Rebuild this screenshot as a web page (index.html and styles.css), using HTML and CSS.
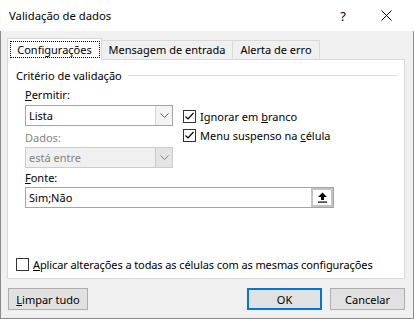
FILE: index.html
```html
<!DOCTYPE html>
<html lang="pt">
<head>
  <meta charset="UTF-8" />
  <title>Validação de dados</title>
  <link rel="stylesheet" href="styles.css">
</head>
<body>
  <div class="dialog">
    <!-- Barra de título -->
    <div class="titlebar">
      <span class="title">Validação de dados</span>
      <span class="help">?</span>
      <span class="close">
        <svg width="11" height="11" viewBox="0 0 11 11"><path d="M0.5 0.5 L10.5 10.5 M10.5 0.5 L0.5 10.5" stroke="#000" stroke-width="1" fill="none"/></svg>
      </span>
    </div>

    <div class="body">
      <!-- Abas -->
      <div class="tabs">
        <div class="tab active"><span class="focus">Configurações</span></div>
        <div class="tab msg">Mensagem de entrada</div>
        <div class="tab alert">Alerta de erro</div>
      </div>

      <div class="panel">
        <div class="group-title"><span>Critério de validação</span><span class="line"></span></div>

        <div class="criteria">
          <div class="col-left">
            <div class="label"><u>P</u>ermitir:</div>
            <div class="select">
              <span class="value">Lista</span>
              <span class="arrow"><svg width="9" height="5" viewBox="0 0 9 5"><path d="M0.5 0.5 L4.5 4.5 L8.5 0.5" stroke="#606060" fill="none"/></svg></span>
            </div>
            <div class="label disabled">Dados:</div>
            <div class="select disabled">
              <span class="value">está entre</span>
              <span class="arrow"><svg width="9" height="5" viewBox="0 0 9 5"><path d="M0.5 0.5 L4.5 4.5 L8.5 0.5" stroke="#808080" fill="none"/></svg></span>
            </div>
          </div>
          <div class="col-right">
            <div class="check">
              <span class="box"><svg width="11" height="11" viewBox="0 0 11 11"><path d="M1.5 5.5 L4 8 L9.5 2" stroke="#000" stroke-width="1.2" fill="none"/></svg></span>
              <span>Ignorar em <u>b</u>ranco</span>
            </div>
            <div class="check">
              <span class="box"><svg width="11" height="11" viewBox="0 0 11 11"><path d="M1.5 5.5 L4 8 L9.5 2" stroke="#000" stroke-width="1.2" fill="none"/></svg></span>
              <span>Menu suspenso na <u>c</u>élula</span>
            </div>
          </div>
        </div>

        <div class="label fonte"><u>F</u>onte:</div>
        <div class="textbox">
          <span class="value">Sim;Não</span>
          <span class="ref-btn">
            <svg width="11" height="11" viewBox="0 0 11 11"><path d="M5.5 0.5 L1 5 L4 5 L4 8 L7 8 L7 5 L10 5 Z" fill="#000"/><rect x="1" y="9.5" width="9" height="1.2" fill="#000"/></svg>
          </span>
        </div>

        <div class="check apply">
          <span class="box"></span>
          <span class="apply-text"><u>A</u>plicar alterações a todas as células com as mesmas configurações</span>
        </div>
      </div>

      <!-- Botões -->
      <div class="buttons">
        <button class="btn clear"><u>L</u>impar tudo</button>
        <span class="spacer"></span>
        <button class="btn ok">OK</button>
        <button class="btn cancel">Cancelar</button>
      </div>
    </div>
  </div>
</body>
</html>
```

FILE: styles.css
```css
body {
  margin: 0;
  font-family: 'Noto Sans', 'Liberation Sans', sans-serif;
  font-size: 11px;
  color: #000;
  background: #fff;
}

.dialog {
  width: 414px;
  height: 319px;
  white-space: nowrap;
}

.titlebar {
  height: 31px;
  display: flex;
  align-items: center;
  padding-left: 9px;
  background: #fff;
}

.title {
  flex: 1;
  font-size: 11.3px;
}

.help {
  font-size: 13px;
  width: 20px;
  text-align: center;
  margin-right: 28px;
}

.close {
  display: flex;
  margin-right: 22px;
}

.body {
  height: 288px;
  box-sizing: border-box;
  background: #f0f0f0;
  border: 1px solid #8a8a8a;
  border-top: none;
  padding: 7px 8px 0 6px;
}

/* Abas */
.tabs {
  display: flex;
  align-items: flex-end;
  height: 21px;
}

.tab {
  height: 19px;
  box-sizing: border-box;
  border: 1px solid #d9d9d9;
  border-bottom: none;
  margin-left: -1px;
  display: flex;
  align-items: center;
  justify-content: center;
  line-height: 16px;
}

.tab.msg {
  width: 132px;
}

.tab.alert {
  width: 88px;
}

.tab.active {
  position: relative;
  width: 95px;
  height: 22px;
  margin-left: 0;
  margin-bottom: -1px;
  background: #fff;
  align-items: flex-start;
  padding-top: 3px;
}

.focus {
  outline: 1px dotted #000;
  width: 88px;
  text-align: center;
  line-height: 15px;
}

.panel {
  height: 220px;
  box-sizing: border-box;
  background: #fff;
  border: 1px solid #d9d9d9;
  padding: 7px 7px 0 8px;
}

.group-title {
  display: flex;
  align-items: center;
  height: 16px;
}

.group-title .line {
  flex: 1;
  height: 1px;
  background: #dcdcdc;
  margin-left: 6px;
}

.criteria {
  display: flex;
  padding-left: 9px;
  margin-top: 4px;
}

.col-left {
  width: 148px;
}

.col-right {
  margin-left: 10px;
  padding-top: 20px;
}

.label {
  line-height: 16px;
}

.label.disabled {
  color: #838383;
  margin-top: 4px;
}

.select {
  margin-top: 2px;
  height: 21px;
  box-sizing: border-box;
  border: 1px solid #a5a5a5;
  display: flex;
  background: #fff;
}

.select.disabled {
  margin-top: 1px;
  background: #f0f0f0;
  border-color: #cccccc;
  color: #838383;
}

.select .value,
.textbox .value {
  flex: 1;
  padding-left: 3px;
  line-height: 19px;
}

.select .arrow {
  width: 16px;
  border-left: 1px solid #d4d4d4;
  background: #f3f3f3;
  display: flex;
  align-items: center;
  justify-content: center;
}

.select.disabled .arrow {
  background: #e4e4e4;
  border-left-color: #cccccc;
}

.check {
  display: flex;
  align-items: center;
  height: 19px;
}

.box {
  width: 13px;
  height: 13px;
  box-sizing: border-box;
  border: 1px solid #333;
  background: #fff;
  margin-right: 4px;
  display: flex;
}

.label.fonte {
  margin-left: 9px;
  margin-top: 2px;
}

.textbox {
  margin: 1px 0 0 9px;
  width: 309px;
  height: 21px;
  box-sizing: border-box;
  border: 1px solid #a5a5a5;
  display: flex;
  background: #fff;
}

.ref-btn {
  width: 22px;
  box-sizing: border-box;
  border: 2px solid #c4c4c4;
  background: #fff;
  display: flex;
  align-items: center;
  justify-content: center;
}

.check.apply {
  margin-top: 48px;
  height: 16px;
}

.apply-text {
  letter-spacing: -0.1px;
}

/* Botões */
.buttons {
  display: flex;
  margin-top: 9px;
  gap: 8px;
}

.spacer {
  flex: 1;
}

.btn {
  height: 22px;
  box-sizing: border-box;
  background: #e1e1e1;
  border: 1px solid #adadad;
  font-family: inherit;
  font-size: 11px;
  color: #000;
  padding: 0;
}

.btn.clear {
  width: 80px;
  margin-left: 1px;
}

.btn.ok {
  width: 75px;
  border: 2px solid #0078d7;
}

.btn.cancel {
  width: 75px;
}
```
